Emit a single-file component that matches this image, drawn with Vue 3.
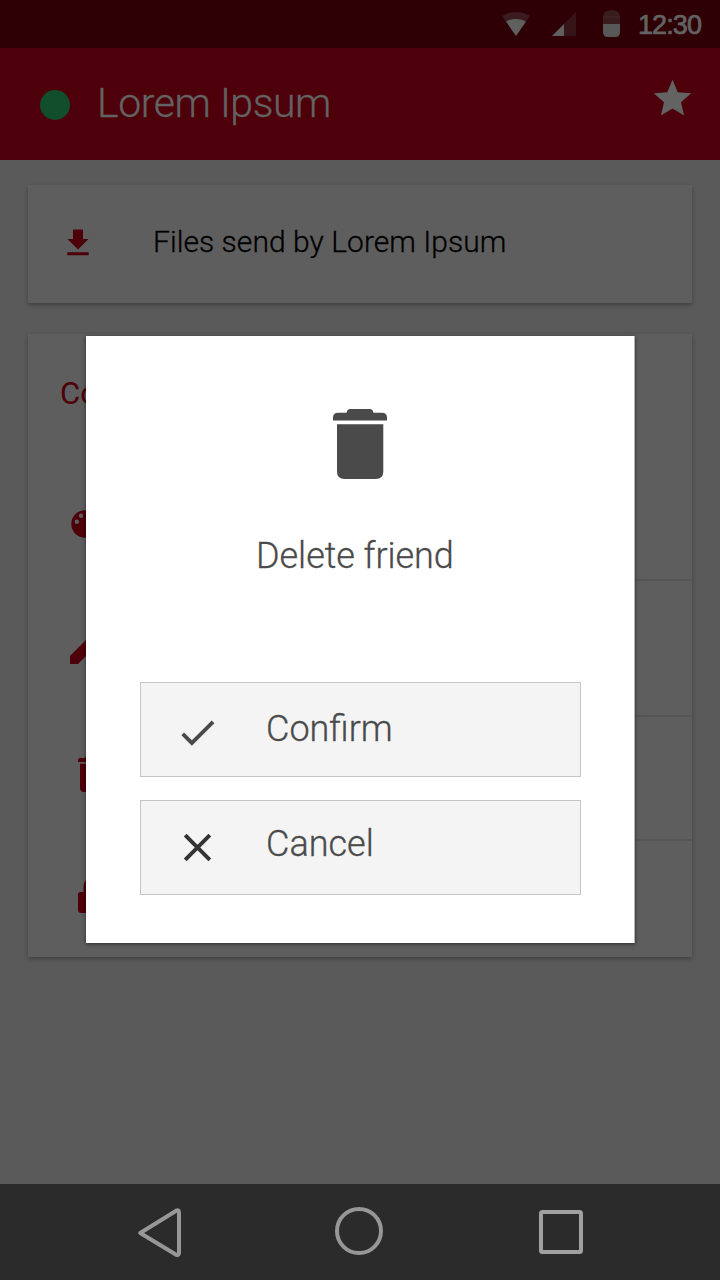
<script setup>
const rows = [
  { name: 'palette', size: 'r1' },
  { name: 'edit', size: 'r2' },
  { name: 'delete', size: 'r3' },
  { name: 'lock', size: 'r4' },
]
</script>

<template>
  <div class="screen">
    <div class="status">
      <svg class="wifi" width="28" height="24" viewBox="0 0 28 24">
        <path d="M0 4C8-1.300 20-1.300 28 4L14 24Z" fill="#3a1b1f" />
        <path d="M4 9.500C10 6.200 18 6.200 24 9.500L14 24Z" fill="#5f5f5f" />
      </svg>
      <svg class="signal" width="24" height="24" viewBox="0 0 24 24">
        <path d="M24 0V24H0Z" fill="#361519" />
        <path d="M12 12V24H0Z" fill="#5f5f5f" />
      </svg>
      <svg class="battery" width="17" height="27" viewBox="0 0 17 27">
        <path d="M0 14V7Q0 0 8.500 0T17 7V14Z" fill="#3a1b1f" />
        <path d="M0 7H17" stroke="#42262a" stroke-width="1" />
        <path d="M0 14H17V22Q17 27 12 27H5Q0 27 0 22Z" fill="#585858" />
      </svg>
      <span class="time">12:30</span>
    </div>
    <header class="bar">
      <i class="dot"></i>
      <h1>Lorem Ipsum</h1>
      <svg class="star" width="45" height="45" viewBox="0 0 24 24">
        <path fill="#636363" d="M12 17.270L18.180 21l-1.640-7.030L22 9.240l-7.190-.61L12 2 9.190 8.630 2 9.240l5.460 4.730L5.820 21z" />
      </svg>
    </header>
    <main>
      <section class="card files">
        <svg width="22" height="26" viewBox="0 0 22 26" fill="#4d000a">
          <path d="M6 -.5H16V9H21.500L11 19.500L.5 9H6ZM.3 22.300H21.700V25.200H.3Z" />
        </svg>
        <span>Files send by Lorem Ipsum</span>
      </section>
      <section class="card options">
        <h2>Co</h2>
        <div v-for="r in rows" :key="r.name" class="row" :class="r.size">
          <svg v-if="r.name === 'palette'" width="30" height="28" viewBox="0 0 30 28">
            <circle cx="15" cy="14" r="13.700" fill="#4d000a" />
            <circle cx="11" cy="5.800" r="2.200" fill="#5e5e5e" />
            <circle cx="6.800" cy="11.800" r="2.200" fill="#5e5e5e" />
          </svg>
          <svg v-else-if="r.name === 'edit'" width="30" height="36" viewBox="0 0 30 36">
            <path d="M0 28L22 6L30 14L8 36H0Z" fill="#4d000a" />
          </svg>
          <svg v-else-if="r.name === 'delete'" width="28" height="36" viewBox="0 0 28 36">
            <path d="M7 2Q7 .3 9 .3H19Q21 .3 21 2H26Q28 2 28 4V6H0V4Q0 2 2 2ZM2 7.700H26V32Q26 36 22 36H6Q2 36 2 32Z" fill="#4d000a" />
          </svg>
          <svg v-else width="28" height="36" viewBox="0 0 28 36">
            <path d="M2.500 15H5.500V11Q5.500 1 14 1T22.500 11V15H25.500Q28 15 28 18V33Q28 36 25 36H3Q0 36 0 33V18Q0 15 2.500 15Z" fill="#4d000a" />
          </svg>
        </div>
      </section>
    </main>
    <nav>
      <svg class="back" width="44" height="50" viewBox="0 0 44 50">
        <path d="M2.200 25L38.200 2.700Q41 1.500 41 4.500V44.500Q41 47.800 38.200 46.800Z" />
      </svg>
      <svg class="home" width="48" height="48" viewBox="0 0 48 48"><circle cx="24" cy="24" r="22" /></svg>
      <svg class="recent" width="44" height="44" viewBox="0 0 44 44"><rect x="2" y="2" width="40" height="40" rx="1.500" /></svg>
    </nav>

    <div class="dialog">
      <svg class="trash" width="54" height="70" viewBox="0 0 54 70">
        <path fill="#4a4a4a" d="M13.500 3.800Q14 0 17.500 0H36.500Q40 0 40.500 3.800H49Q54 3.800 54 8.500V11.500H0V8.500Q0 3.800 5 3.800ZM4 15.300H50.300V62.500Q50.300 70 42.800 70H11.500Q4 70 4 62.500Z" />
      </svg>
      <p>Delete friend</p>
      <button>
        <svg width="45" height="45" viewBox="0 0 24 24"><path fill="#4a4a4a" d="M9 16.170L4.830 12l-1.420 1.410L9 19 21 7l-1.410-1.410z" /></svg>
        <span>Confirm</span>
      </button>
      <button class="cancel">
        <svg width="47" height="47" viewBox="0 0 24 24"><path fill="#333" d="M19 6.410L17.590 5 12 10.590 6.410 5 5 6.410 10.590 12 5 17.590 6.410 19 12 13.410 17.590 19 19 17.590 13.410 12z" /></svg>
        <span>Cancel</span>
      </button>
    </div>
  </div>
</template>

<style>
body { margin: 0; }
</style>

<style scoped>
.screen {
  position: relative;
  width: 720px;
  height: 1280px;
  overflow: hidden;
  display: flex;
  flex-direction: column;
  background: #5a5a5a;
  font-family: Roboto, sans-serif;
  font-weight: 300;
  -webkit-text-stroke-width: 0.3px;
}
svg { display: block; flex: none; overflow: visible; }
.status {
  height: 48px;
  box-sizing: border-box;
  display: flex;
  align-items: flex-start;
  padding: 12px 0 0 502px;
  background: #2e0006;
}
.signal { margin-left: 22px; }
.battery { margin: -2px 0 0 27px; }
.time {
  margin: -3px 0 0 18px;
  font: 400 27px/32px "Liberation Sans", sans-serif;
  letter-spacing: -0.9px;
  color: #636363;
  -webkit-text-stroke: 0.7px #636363;
}
.bar {
  height: 112px;
  display: flex;
  background: #4d000a;
}
.dot {
  width: 30px;
  height: 30px;
  margin: 42px 0 0 40px;
  border-radius: 50%;
  background: #124e2b;
}
h1 {
  margin: 31px 0 0 27px;
  font-size: 41px;
  line-height: 48px;
  font-weight: 300;
  letter-spacing: -0.45px;
  color: #636363;
}
.star { margin: 28px 25px 0 auto; }
main {
  flex: 1;
  padding: 25px 28px 0;
}
.card {
  box-sizing: border-box;
  background: #5e5e5e;
  box-shadow: 0 2px 4px rgba(0, 0, 0, 0.3);
}
.files {
  height: 118px;
  display: flex;
  padding: 45px 0 0 39px;
}
.files span {
  margin: -7px 0 0 64px;
  font-size: 30px;
  line-height: 37px;
  letter-spacing: 0.04px;
  color: #000;
}
.options {
  height: 623px;
  margin-top: 31px;
  display: flex;
  flex-direction: column;
}
h2 {
  margin: 0;
  height: 109px;
  box-sizing: border-box;
  padding: 42px 0 0 32px;
  font-size: 31px;
  line-height: 36px;
  font-weight: 400;
  -webkit-text-stroke-width: 0;
  color: #4d000a;
}
.row {
  box-sizing: border-box;
  margin-left: 58px;
  border-bottom: 2px solid #555;
}
.row svg { margin-left: -16px; }
.r1 { height: 138px; padding-top: 67px; }
.r2 { height: 136px; padding-top: 47px; }
.r3 { height: 124px; padding-top: 39px; }
.r4 { height: 116px; padding-top: 36px; border: 0; }
.r3 svg, .r4 svg { margin-left: -8px; }
nav {
  height: 96px;
  display: flex;
  background: #2b2b2b;
}
nav svg { fill: none; stroke: #979797; stroke-width: 4; stroke-linejoin: round; }
.back { margin: 24px 0 0 138px; }
.home { margin: 23px 0 0 153px; }
.recent { margin: 26px 0 0 156px; stroke: #a0a0a0; }
.dialog {
  position: absolute;
  left: 86px;
  top: 336px;
  width: 549px;
  height: 607px;
  box-sizing: border-box;
  padding: 73px 54px 0;
  background: #fff;
  box-shadow: inset -1px 0 #b5b5b5, 0 1px 4px rgba(0, 0, 0, 0.55);
  color: #4a4a4a;
}
.trash { margin-left: 193px; }
p {
  margin: 55px 0 103px 116px;
  font-size: 36px;
  line-height: 45px;
  letter-spacing: -0.05px;
  white-space: nowrap;
}
button {
  width: 441px;
  height: 95px;
  box-sizing: border-box;
  display: flex;
  align-items: flex-start;
  margin: 0 0 23px;
  padding: 27px 0 0 33.500px;
  border: 1px solid #c5c5c5;
  background: #f4f4f4;
  color: #4a4a4a;
  font: 300 36px/44px Roboto, sans-serif;
  text-align: left;
  -webkit-text-stroke-width: 0.3px;
}
button span { margin: -3px 0 0 46.500px; }
.cancel { padding-top: 23px; padding-left: 32.500px; }
.cancel span { margin: -2px 0 0 45.500px; }
</style>
